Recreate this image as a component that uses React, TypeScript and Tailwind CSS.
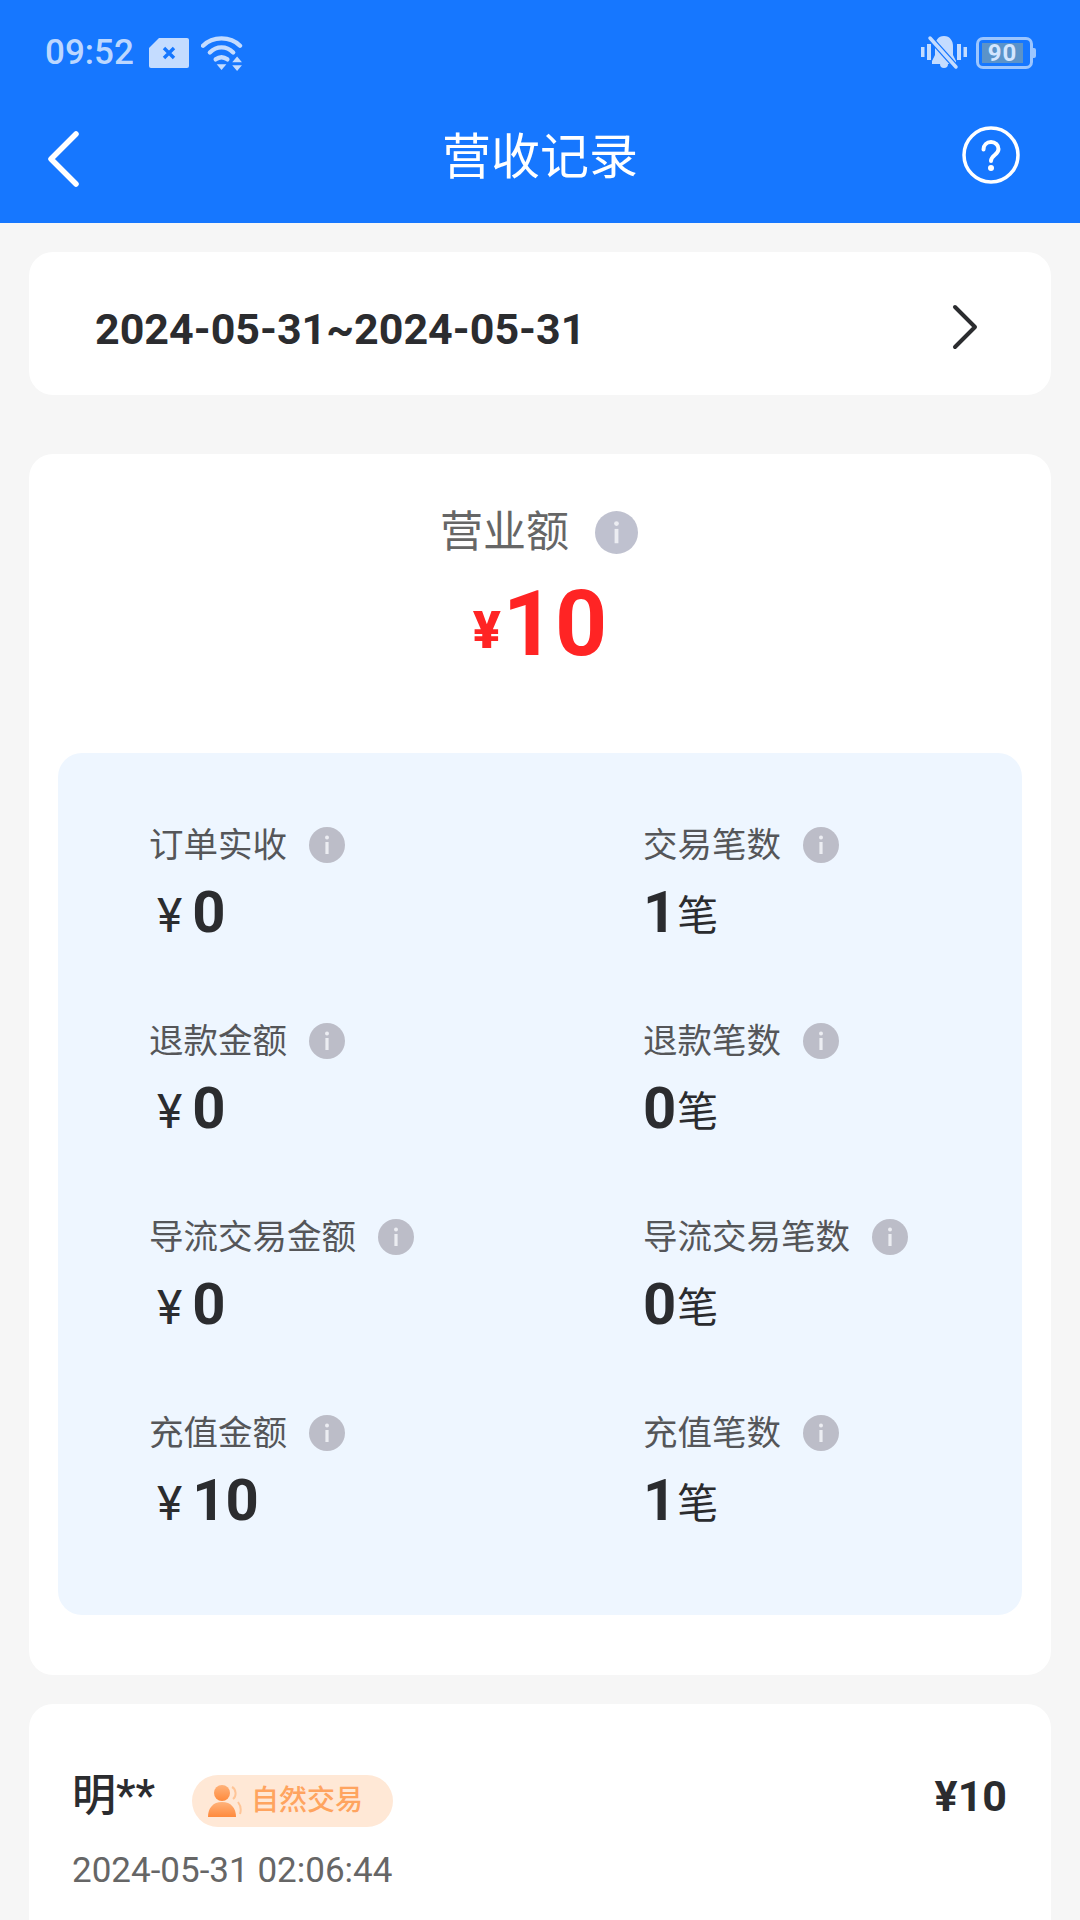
const Info = ({ size = 36, bg = "bg-[#bcbdc8]" }: { size?: number; bg?: string }) => (
  <svg width={size} height={size} viewBox="0 0 36 36" className="shrink-0">
    <circle cx="18" cy="18" r="18" fill={bg === "hero" ? "#bfc1cf" : "#bcbdc8"} />
    <rect x="16.4" y="15" width="3.2" height="12" fill="#ecedf2" />
    <circle cx="18" cy="10.5" r="2" fill="#ecedf2" />
  </svg>
);

type Cell = { label: string; value: string; money: boolean };

const Stat = ({ label, value, money }: Cell) => (
  <div className="h-[196px] flex flex-col">
    <div className="flex items-center h-[50px] text-[34.5px] leading-[50px] text-[#555659]">
      <span>{label}</span>
      <span className="ml-[22px] flex">
        <Info />
      </span>
    </div>
    <div className="flex items-baseline mt-[7px] h-[70px] leading-[70px] text-[#2b2c2f]">
      {money && <span className="text-[48px] font-normal ml-[8px] mr-[10px]">¥</span>}
      <span className="text-[58px] font-bold">{value}</span>
      {!money && <span className="text-[41px] ml-[1px] -translate-y-[2px]">笔</span>}
    </div>
  </div>
);

const cells: Cell[] = [
  { label: "订单实收", value: "0", money: true },
  { label: "交易笔数", value: "1", money: false },
  { label: "退款金额", value: "0", money: true },
  { label: "退款笔数", value: "0", money: false },
  { label: "导流交易金额", value: "0", money: true },
  { label: "导流交易笔数", value: "0", money: false },
  { label: "充值金额", value: "10", money: true },
  { label: "充值笔数", value: "1", money: false },
];

export default function App() {
  return (
    <div className="w-[1080px] h-[1920px] overflow-hidden bg-[#f6f6f6] font-['Roboto','Noto_Sans_CJK_SC',sans-serif]">
      <header className="h-[223px] bg-[#1677ff] flex flex-col">
        <div className="h-[100px] pt-[33px] pl-[45px] pr-[44px] flex items-start justify-between">
          <div className="flex items-center h-[40px] gap-[15px] text-[#bcd7ff]">
            <span className="text-[35px] font-medium leading-[40px]">09:52</span>
            <svg width="40" height="32" viewBox="0 0 40 32">
              <path d="M10 1H38a2 2 0 0 1 2 2V29a2 2 0 0 1-2 2H2a2 2 0 0 1-2-2V11Z" fill="#c4dcff" />
              <path d="M15 11l10 10M25 11l-10 10" stroke="#1677ff" strokeWidth="3.4" />
            </svg>
            <svg width="43" height="35" viewBox="0 0 44 36" fill="none" stroke="#c4dcff" strokeLinecap="round" className="ml-[-3px]">
              <path d="M2 10C12 0 30 0 40 10" strokeWidth="4.500" />
              <path d="M9 17C16 10 26 10 33 17" strokeWidth="4.500" />
              <path d="M15 24C19 21 23 21 27 24" strokeWidth="4.500" />
              <path d="M16 29h10l-5 6Z" fill="#c4dcff" stroke="none" />
              <path d="M32 27h10l-5-6ZM32 30h10l-5 6Z" fill="#c4dcff" stroke="none" />
            </svg>
          </div>
          <div className="flex items-center h-[40px] gap-[9px]">
            <svg width="46" height="36" viewBox="0 0 46 36">
              <path d="M0 12h3.500v10H0ZM6 9h4v16H6ZM36 9h4v16h-4ZM42.500 12H46v10h-3.500Z" fill="#c4dcff" />
              <path d="M23 1c6 0 9 5 9 10v9l3 6v3H27a4 4 0 0 1-8 0H11v-3l3-6V11c0-5 3-10 9-10Z" fill="#c4dcff" />
              <path d="M9 3l26 29" stroke="#1677ff" strokeWidth="6" />
              <path d="M9 3l26 29" stroke="#c4dcff" strokeWidth="3.500" strokeLinecap="round" />
            </svg>
            <div className="flex items-center">
              <div className="w-[57px] h-[32px] rounded-[7px] border-[3px] border-[#9cc6ff] p-[3px] flex">
                <div className="w-[41px] h-full bg-[#5b93c9] flex items-center justify-center text-[24px] font-bold text-[#d3e6ff] leading-none tracking-[1px]">
                  90
                </div>
              </div>
              <div className="w-[3px] h-[10px] rounded-r-[2px] bg-[#9cc6ff]" />
            </div>
          </div>
        </div>
        <div className="flex-1 relative flex items-center justify-center pb-[8px]">
          <svg width="32" height="56" viewBox="0 0 32 56" fill="none" className="absolute left-[48px] top-[31px]">
            <path d="M28 3 3 28l25 25" stroke="#fff" strokeWidth="5.500" strokeLinecap="round" strokeLinejoin="round" />
          </svg>
          <span className="text-[49px] leading-[60px] text-white">营收记录</span>
          <svg width="58" height="58" viewBox="0 0 58 58" fill="none" className="absolute left-[962px] top-[26px]">
            <circle cx="29" cy="29" r="27" stroke="#fff" strokeWidth="3.500" />
            <path d="M21.500 23.500c0-4.500 3.300-7.500 7.500-7.500s7.500 3 7.500 7c0 6-7.500 6-7.500 12" stroke="#fff" strokeWidth="4" strokeLinecap="round" />
            <circle cx="29" cy="42" r="3" fill="#fff" />
          </svg>
        </div>
      </header>

      <main className="px-[29px]">
        <section className="mt-[29px] h-[143px] rounded-[24px] bg-white flex items-center justify-between pl-[66px] pr-[73px]">
          <span className="text-[43px] font-bold text-[#2b2c2f] leading-none pt-[11px]">2024-05-31~2024-05-31</span>
          <svg width="26" height="46" viewBox="0 0 26 46" fill="none" className="mt-[7px]">
            <path d="M3 3l20 20L3 43" stroke="#2b2c2f" strokeWidth="4" strokeLinecap="round" strokeLinejoin="round" />
          </svg>
        </section>

        <section className="mt-[59px] h-[1221px] rounded-[24px] bg-white px-[29px] flex flex-col">
          <div className="h-[299px] flex flex-col items-center pt-[46px]">
            <div className="flex items-center h-[64px] text-[43px] leading-[64px] text-[#666666] ml-[-2px]">
              <span>营业额</span>
              <span className="ml-[26px] flex">
                <Info size={43} bg="hero" />
              </span>
            </div>
            <div className="flex items-baseline h-[110px] leading-[110px] mt-[5px] font-bold text-[#ff2424]">
              <span className="text-[52px] font-black mr-[2px] -translate-y-[7px]">¥</span>
              <span className="text-[91px]">10</span>
            </div>
          </div>
          <div className="h-[862px] rounded-[24px] bg-[#eef6ff] pt-[67px] pl-[91px] grid grid-cols-[494px_1fr] content-start">
            {cells.map((c) => (
              <Stat key={c.label} {...c} />
            ))}
          </div>
        </section>

        <section className="mt-[29px] h-[260px] rounded-t-[24px] bg-white px-[43px] pt-[62px]">
          <div className="flex items-center justify-between h-[60px]">
            <div className="flex items-center">
              <span className="text-[44px] font-medium text-[#2b2c2f] leading-[60px] w-[120px]">明**</span>
              <div className="h-[52px] w-[201px] rounded-full bg-[#ffe8d6] flex items-center pl-[16px] gap-[9px] mt-[10px]">
                <svg width="34" height="34" viewBox="0 0 34 34">
                  <defs>
                    <linearGradient id="p" x1="0" y1="0" x2="0" y2="1">
                      <stop offset="0" stopColor="#ffb27a" />
                      <stop offset="1" stopColor="#ff8a3c" />
                    </linearGradient>
                  </defs>
                  <circle cx="14" cy="9" r="8" fill="url(#p)" />
                  <path d="M0 33c0-9 5-15 14-15s14 6 14 15Z" fill="url(#p)" />
                  <path d="M24 3c4 2 5 9 1 12M30 18c3 4 3 9 2 12" stroke="#ffc597" strokeWidth="2" fill="none" />
                </svg>
                <span className="text-[28px] leading-none font-medium text-[#ffa45f]">自然交易</span>
              </div>
            </div>
            <span className="text-[43px] font-bold text-[#2b2c2f] mr-[1px]">¥10</span>
          </div>
          <div className="mt-[23px] text-[35px] leading-[44px] text-[#666666]">2024-05-31 02:06:44</div>
        </section>
      </main>
    </div>
  );
}
